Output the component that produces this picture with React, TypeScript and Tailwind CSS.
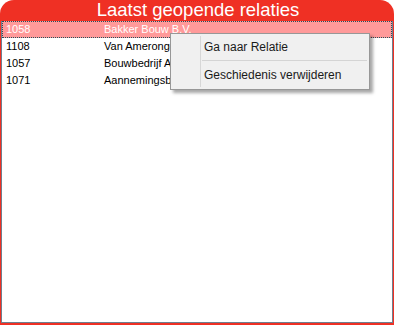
import React from 'react';

interface Relatie {
  nummer: string;
  naam: string;
}

const relaties: Relatie[] = [
  { nummer: '1058', naam: 'Bakker Bouw B.V.' },
  { nummer: '1108', naam: 'Van Amerongen Bouw' },
  { nummer: '1057', naam: 'Bouwbedrijf Altena' },
  { nummer: '1071', naam: 'Aannemingsbedrijf De Vries' },
];

function cn(...classes: Array<string | false | null | undefined>) {
  return classes.filter(Boolean).join(' ');
}

function ContextMenu() {
  return (
    <div className="absolute left-[170px] top-[33px] w-[200px] border border-[#979797] bg-[#f0f0f0] py-[2px] font-['Liberation_Sans',sans-serif] text-[12px] text-[#1a1a1a] shadow-[3px_3px_3px_rgba(0,0,0,0.35)]">
      <div className="relative">
        <div className="absolute bottom-0 left-[29px] top-0 w-px bg-[#d7d7d7]" />
        <div className="flex h-[22px] items-center pl-[33px]">Ga naar Relatie</div>
        <div className="ml-[31px] mr-[2px] my-[2px] h-px bg-[#d4d4d4]" />
        <div className="flex h-[24px] items-center pl-[33px]">Geschiedenis verwijderen</div>
      </div>
    </div>
  );
}

export default function App() {
  return (
    <div className="relative h-[325px] w-[394px] bg-white">
      <div className="flex h-full flex-col">
        <header className="flex h-[21px] items-center justify-center rounded-t-[14px] bg-[#ef3024] pl-[2px] font-['Liberation_Sans',sans-serif] text-[18.5px] leading-none text-white">
          Laatst geopende relaties
        </header>
        <div className="flex-1 border-x border-b-2 border-[#ef3024]">
          <div className="h-full border-x border-b border-[#6e7f8f] bg-white">
            {relaties.map((r, i) => (
              <div
                key={r.nummer}
                className={cn(
                  "flex h-[17px] items-center font-['Liberation_Sans',sans-serif] text-[11px]",
                  i === 0 ? 'border border-dotted border-[#24535f] bg-[#ff9a9a] text-white' : 'border border-transparent text-black'
                )}
              >
                <span className="w-[101px] pl-[3px]">{r.nummer}</span>
                <span>{r.naam}</span>
              </div>
            ))}
          </div>
        </div>
      </div>
      <ContextMenu />
    </div>
  );
}
